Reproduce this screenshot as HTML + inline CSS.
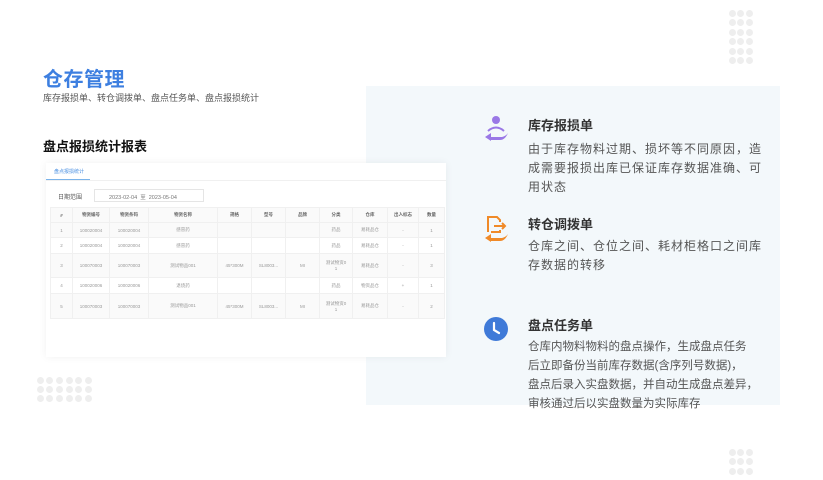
<!DOCTYPE html>
<html><head><meta charset="utf-8"><style>
*{margin:0;padding:0;box-sizing:border-box}
body{width:823px;height:480px;background:#fff;position:relative;overflow:hidden;font-family:"Liberation Sans","Noto Sans CJK SC",sans-serif}
.a{position:absolute}
.dot{position:absolute;width:7px;height:7px;border-radius:50%;background:#eeeeee}
.h1{left:43px;top:63px;font-size:20px;font-weight:bold;color:#3d7fe0;letter-spacing:0.5px}
.sub{left:43px;top:91px;font-size:9px;color:#555}
.h2{left:43px;top:136px;font-size:13px;font-weight:bold;color:#111}
.panel{left:366px;top:86px;width:414px;height:319px;background:#f3f8fb}
.card{left:46px;top:163px;width:400px;height:194px;background:#fff;box-shadow:0 0 8px rgba(0,0,0,.06)}
.t{font-size:13px;font-weight:bold;color:#333;left:528px}
.d{font-size:12px;color:#555;line-height:19px;left:528px;letter-spacing:1px;white-space:nowrap}
table{border-collapse:collapse;position:absolute;left:4px;top:44px;width:395px;font-size:4.5px;color:#999;text-align:center}
td,th{border:1px solid #f0f0f0;padding:0}
th{height:15px;background:#fafafa;font-weight:bold;color:#666}
tr:nth-child(even) td{background:#fafafa}
</style></head><body>
<div class="a panel"></div>
<div class="a h1">仓存管理</div>
<div class="a sub">库存报损单、转仓调拨单、盘点任务单、盘点报损统计</div>
<div class="a h2">盘点报损统计报表</div>
<div class="a card">
 <div class="a" style="left:8px;top:5px;font-size:5px;color:#4a90e2">盘点报损统计</div>
 <div class="a" style="left:0;top:16px;width:44px;height:1px;background:#7ab3ea"></div>
 <div class="a" style="left:0;top:17px;width:400px;height:1px;background:#f0f0f0"></div>
 <div class="a" style="left:12px;top:29px;font-size:6px;color:#555">日期范围</div>
 <div class="a" style="left:48px;top:26px;width:110px;height:13px;border:1px solid #e5e5e5;font-size:5.5px;color:#777;padding:3px 0 0 14px">2023-02-04 &nbsp;至&nbsp; 2023-05-04</div>
 <table>
 <tr><th style="width:22px">#</th><th style="width:37px">物资编号</th><th style="width:39px">物资条码</th><th style="width:69px">物资名称</th><th style="width:34px">规格</th><th style="width:34px">型号</th><th style="width:34px">品牌</th><th style="width:33px">分类</th><th style="width:35px">仓库</th><th style="width:31px">出入标志</th><th>数量</th></tr>
 <tr style="height:15px"><td>1</td><td>100020004</td><td>100020004</td><td>感冒药</td><td></td><td></td><td></td><td>药品</td><td>易耗品仓</td><td>-</td><td>1</td></tr>
 <tr style="height:16px"><td>2</td><td>100020004</td><td>100020004</td><td>感冒药</td><td></td><td></td><td></td><td>药品</td><td>易耗品仓</td><td>-</td><td>1</td></tr>
 <tr style="height:24px"><td>3</td><td>100070003</td><td>100070003</td><td>测试物品001</td><td>45*300M</td><td>SL8003...</td><td>MI</td><td>测试物资0<br>1</td><td>易耗品仓</td><td>-</td><td>3</td></tr>
 <tr style="height:16px"><td>4</td><td>100020006</td><td>100020006</td><td>退烧药</td><td></td><td></td><td></td><td>药品</td><td>物资品仓</td><td>+</td><td>1</td></tr>
 <tr style="height:25px"><td>5</td><td>100070003</td><td>100070003</td><td>测试物品001</td><td>45*300M</td><td>SL8003...</td><td>MI</td><td>测试物资0<br>1</td><td>易耗品仓</td><td>-</td><td>2</td></tr>
 </table>
</div>

<svg class="a" style="left:482px;top:114px" width="28" height="30" viewBox="0 0 28 30">
 <circle cx="14" cy="6" r="4" fill="#9a78e6"/>
 <path d="M6 17 Q14 10 22 17" stroke="#9a78e6" stroke-width="2" fill="none"/>
 <path d="M3 23 L9 19 L9 27 Z" fill="#9a78e6"/>
 <path d="M8 23 H20 Q24 22 26 19 Q23 26 18 26 H8 Z" fill="#9a78e6"/>
</svg>
<svg class="a" style="left:482px;top:214px" width="28" height="30" viewBox="0 0 28 30">
 <path d="M12 3 H6 V18 M6 3 H15 L18 6 V8 M18 16 V18 H9" stroke="#f08a28" stroke-width="2" fill="none"/>
 <path d="M12 12 H23 M20 9 L23 12 L20 15" stroke="#f08a28" stroke-width="2" fill="none"/>
 <path d="M3 24 L9 20 L9 28 Z" fill="#f08a28"/>
 <path d="M8 24 H20 Q24 23 26 20 Q23 27 18 27 H8 Z" fill="#f08a28"/>
</svg>
<svg class="a" style="left:484px;top:317px" width="24" height="24" viewBox="0 0 24 24">
 <circle cx="12" cy="12" r="12" fill="#3f7ad8"/>
 <path d="M10 6 V13 L15 16" stroke="#fff" stroke-width="2.2" fill="none" stroke-linecap="round"/>
</svg>

<div class="a t" style="top:115px">库存报损单</div>
<div class="a d" style="top:140px">由于库存物料过期、损坏等不同原因，造<br>成需要报损出库已保证库存数据准确、可<br>用状态</div>
<div class="a t" style="top:214px">转仓调拨单</div>
<div class="a d" style="top:237px">仓库之间、仓位之间、耗材柜格口之间库<br>存数据的转移</div>
<div class="a t" style="top:315px">盘点任务单</div>
<div class="a d" style="top:338px;font-size:11.5px;letter-spacing:0">仓库内物料物料的盘点操作，生成盘点任务<br>后立即备份当前库存数据(含序列号数据)，<br>盘点后录入实盘数据，并自动生成盘点差异，<br>审核通过后以实盘数量为实际库存</div>

<div id="dots"></div>
<script>
function g(x0,y0,c,r,dx,dy){var s='';for(var i=0;i<r;i++)for(var j=0;j<c;j++)s+='<div class="dot" style="left:'+(x0+j*dx-3.5)+'px;top:'+(y0+i*dy-3.5)+'px"></div>';return s;}
document.getElementById('dots').innerHTML=g(732,13,3,6,8.5,9.5)+g(40,380,6,3,9.7,9)+g(732,452,3,3,8.5,9.5);
</script>
</body></html>
